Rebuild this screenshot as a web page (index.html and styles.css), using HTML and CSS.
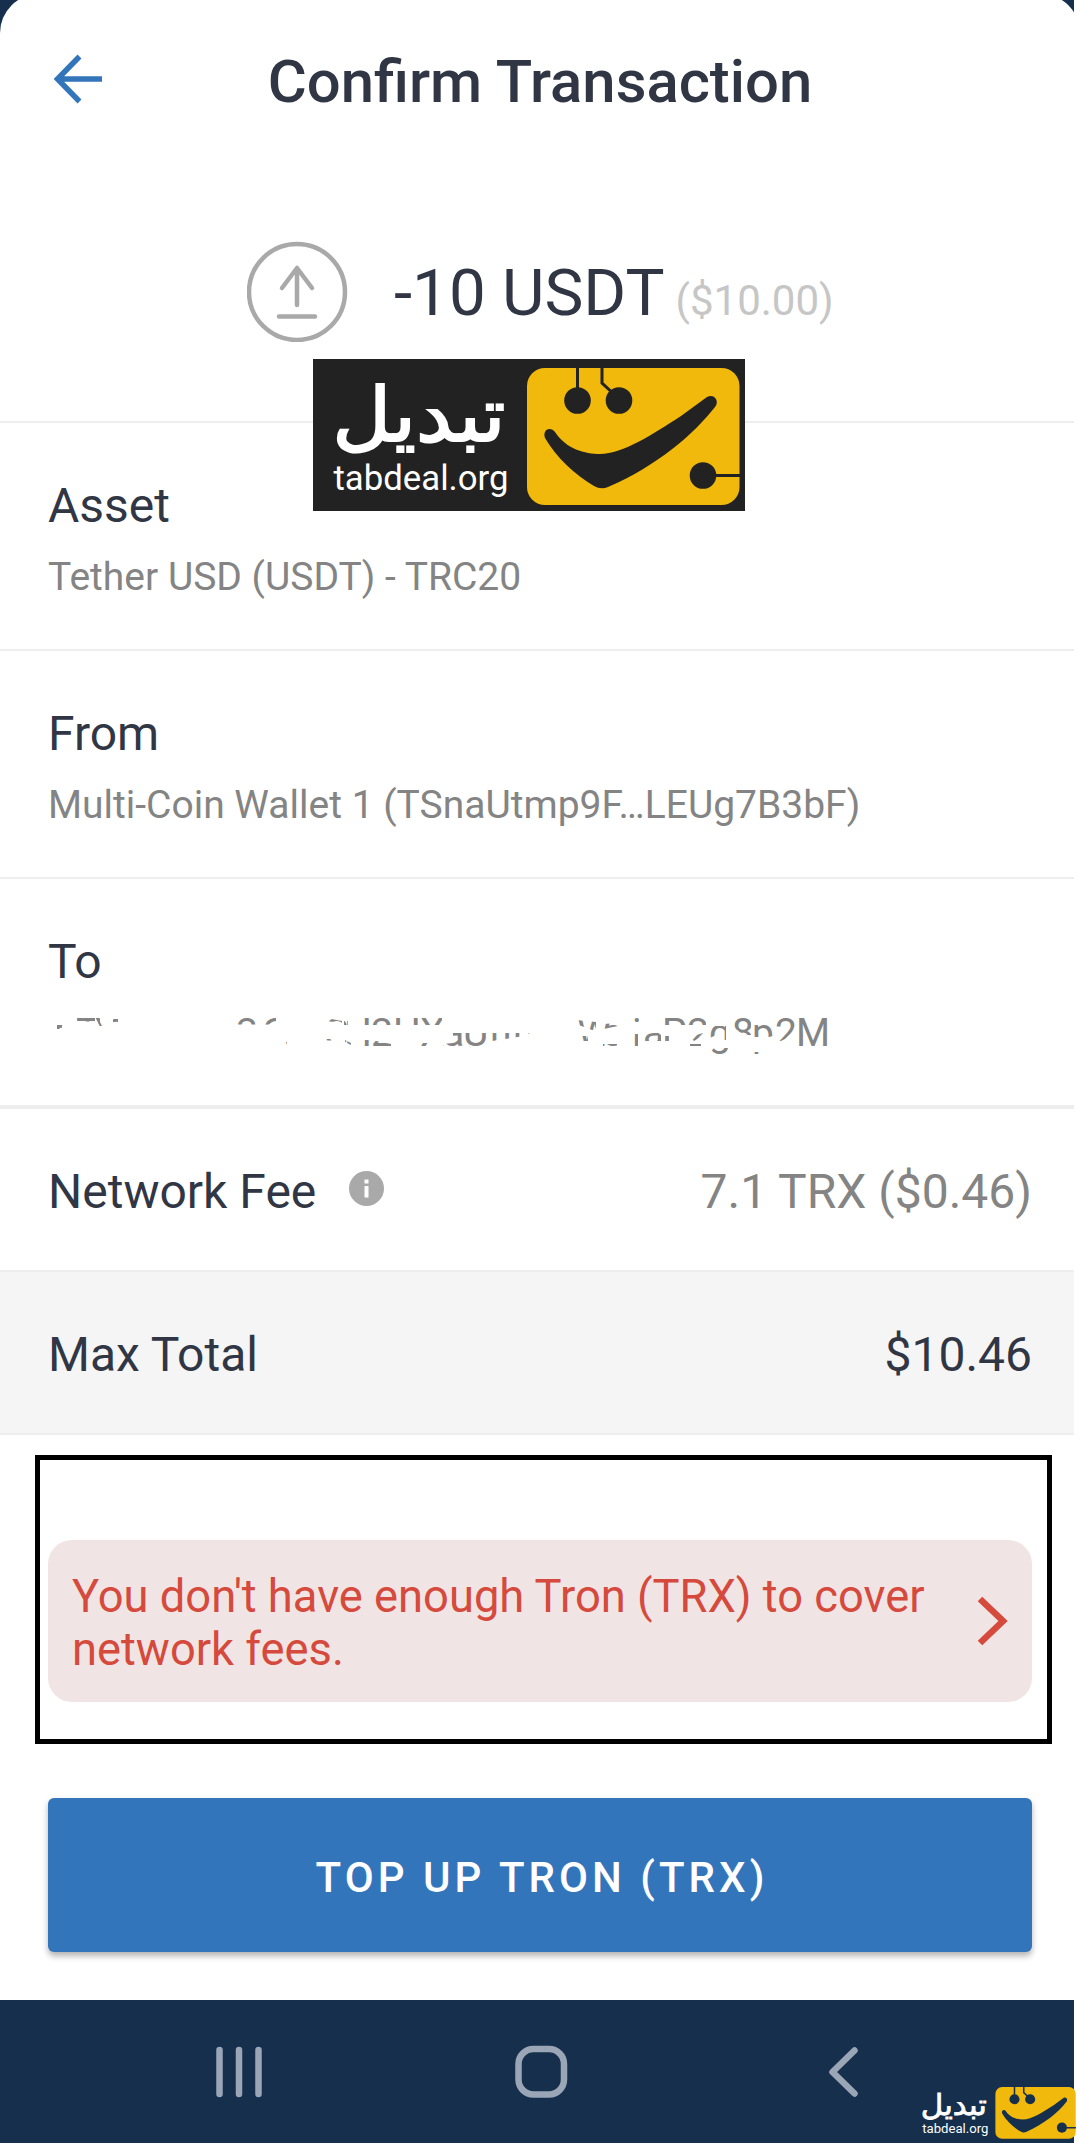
FILE: index.html
```
<!DOCTYPE html>
<html lang="en">

<head>
  <meta charset="utf-8">
  <title>Confirm Transaction</title>
  <link rel="stylesheet" href="styles.css">
</head>

<body>
  <div class="screen">
    <div class="sheet">
      <div class="header">
        <svg class="back" width="50" height="50" viewBox="0 0 50 50">
          <path d="M50 25H6M27.500 2.500L5.500 25l22 22.500" fill="none" stroke="#3375bb" stroke-width="5.500"/>
        </svg>
        <h1 class="title">Confirm Transaction</h1>
      </div>

      <div class="amount">
        <svg class="send-icon" width="101" height="101" viewBox="0 0 101 101">
          <g fill="none" stroke="#a9a9a9" stroke-width="4.500" stroke-linecap="round" stroke-linejoin="round">
            <circle cx="50" cy="51" r="48"/>
            <path d="M50 64V27M35 47l15-20 15 20M32 75.500h36"/>
          </g>
        </svg>
        <span class="amount-value">-10 USDT</span>
        <span class="amount-fiat">($10.00)</span>
      </div>

      <div class="row">
        <div class="label">Asset</div>
        <div class="value">Tether USD (USDT) - TRC20</div>
      </div>
      <div class="row">
        <div class="label">From</div>
        <div class="value">Multi-Coin Wallet 1 (TSnaUtmp9F…LEUg7B3bF)</div>
      </div>
      <div class="row row-last">
        <div class="label">To</div>
        <!-- address is partly wiped out -->
        <svg class="address" width="800" height="50" viewBox="40 1010 800 50">
          <clipPath id="wiped">
            <path d="M57 1025h5v4h-5zM77 1017h18v4.500h-18zM80 1034h5v7h-5zM96 1018h4v4l2 4h-3zM113 1019h5v3h-5zM228 1018h4v3h-4zM236 1017h40v7.500h-40zM302 1021h4v4h-4zM283 1042h4v4h-4zM326 1018l16 3v2l-16-2zM344 1021h4v4h-4zM326 1039h6v1.500h-6zM345 1040l6 3v2l-6-3zM362 1017h80v8h-80zM363 1040h8l20 4v2h-28zM420 1043h14v3h-14zM443 1044l10-1v-10h36v13h-46zM490 1033h40l-6 3-32 5zM576 1020l20 2v8h-4l-16-6zM603 1024l15-1v3l-15 3zM633 1016h6v6h-6zM577 1036h11v5h-11zM603 1044h14v3h-14zM632 1034h6v12h-6zM641 1032h16l4 3v6h-20zM664 1017h42v8h-42zM664 1036h5v5h-5zM690 1044h11v3h-11zM690 1037l13-4 3 1-12 7zM710 1026h16v14h-4v-8l-12 6zM710 1048h18v7h-18zM731 1016h20v19h-6l-14-8zM754 1025h19v11l-4 1h-15zM753 1052h6v2h-6zM775 1016h20v14l-10 9-4 2h-6zM797 1014h34v36h-34z"/>
          </clipPath>
          <g clip-path="url(#wiped)">
            <text class="address-text" y="1046" x="52 76 95 113 236 261 282 325 344 371 393 420 443 463 490 513 577 603 632 643 662 687 709 732 752 775 796">tTYi26tSH2HXaUnnWsiaP2g8p2M</text>
          </g>
        </svg>
      </div>

      <div class="line">
        <span class="line-name">Network Fee</span>
        <svg class="info" width="35" height="35" viewBox="0 0 35 35">
          <circle cx="17.500" cy="17.500" r="17.500" fill="#a9a9a9"/>
          <path d="M15.500 8.500h4v4h-4zM15.500 15h4v11.500h-4z" fill="#fff"/>
        </svg>
        <span class="line-fee">7.1 TRX ($0.46)</span>
      </div>
      <div class="line total">
        <span class="line-name">Max Total</span>
        <span class="line-sum">$10.46</span>
      </div>

      <div class="highlight">
        <div class="alert">
          <p class="alert-text">You don't have enough Tron (TRX) to cover network fees.</p>
          <svg class="chevron" width="34" height="50" viewBox="0 0 34 50">
            <path d="M3 3l23 22L3 47" fill="none" stroke="#d54a3c" stroke-width="6.500"/>
          </svg>
        </div>
      </div>

      <button class="topup">TOP UP TRON (TRX)</button>

      <div class="navbar">
        <svg width="1080" height="143" viewBox="0 2000 1080 143">
          <g fill="none" stroke="#9aa6b6" stroke-width="6.500" stroke-linecap="round" stroke-linejoin="round">
            <path d="M219.500 2050v44M239 2050v44M258.500 2050v44"/>
            <rect x="518.500" y="2049" width="45.500" height="45.500" rx="15"/>
            <path d="M854.500 2050.500L832.500 2072l22 21.500"/>
          </g>
        </svg>
      </div>
    </div>

    <svg class="banner" width="432" height="152" viewBox="0 0 432 152">
      <rect width="432" height="152" fill="#222"/>
      <text class="brand-fa" transform="translate(192.500 81.500) scale(1.065 .985)" direction="rtl">تبدیل</text>
      <text class="brand-url" x="20.500" y="131" textLength="175" lengthAdjust="spacingAndGlyphs">tabdeal.org</text>
      <g class="face">
        <rect x="214" y="9" width="212.500" height="137" rx="18" fill="#f0b90b"/>
        <g fill="#222">
          <circle cx="264.500" cy="41.500" r="13.300"/>
          <circle cx="306" cy="41.500" r="13.300"/>
          <circle cx="390" cy="116.500" r="13.300"/>
          <path d="M232 79C229 70 238 67 242 73C253 90 272 95 287 95C310 95 340 75 368 57L394 38C401 34 407 42 402 48C381 75 344 107 295 128Q288 131 281 127C262 116 243 98 232 79Z"/>
        </g>
        <path d="M264.500 9v32M289 9v15l15 14M390 116.500h37" fill="none" stroke="#222" stroke-width="3"/>
      </g>
    </svg>
  </div>

  <svg class="watermark" width="176" height="73" viewBox="-20 -17 176 73">
    <text class="brand-fa" transform="translate(67 30.500) scale(.408 .375)" direction="rtl">تبدیل</text>
    <text class="brand-url" transform="translate(-5.500 -.400) scale(.378)" x="20.500" y="131" textLength="175" lengthAdjust="spacingAndGlyphs">tabdeal.org</text>
    <g transform="translate(-5.500 -.400) scale(.378)">
      <rect x="214" y="9" width="212.500" height="137" rx="18" fill="#f0b90b"/>
      <g fill="#152f4c">
        <circle cx="264.500" cy="41.500" r="13.300"/>
        <circle cx="306" cy="41.500" r="13.300"/>
        <circle cx="390" cy="116.500" r="13.300"/>
        <path d="M232 79C229 70 238 67 242 73C253 90 272 95 287 95C310 95 340 75 368 57L394 38C401 34 407 42 402 48C381 75 344 107 295 128Q288 131 281 127C262 116 243 98 232 79Z"/>
      </g>
      <path d="M264.500 5v36M289 5v19l15 14M390 116.500h37" fill="none" stroke="#152f4c" stroke-width="4"/>
    </g>
  </svg>
</body>

</html>
```
FILE: styles.css
```
body {
  margin: 0;
  background: #fff;
  font-family: Roboto, "Noto Sans", sans-serif;
  position: relative;
  width: 1080px;
  height: 2143px;
  overflow: hidden;
}

.screen {
  position: relative;
  width: 1074px;
  height: 2143px;
  overflow: hidden;
  background: #152f4c;
}

/* rounded top runs slightly above the screen edge */
.sheet {
  width: 1080px;
  height: 2149px;
  margin-top: -6px;
  border-radius: 39px 39px 0 0;
  background: #fff;
  color: #313645;
  box-sizing: border-box;
  padding-top: 6px;
}

.header {
  height: 160px;
  display: grid;
  grid-template-columns: 104px 872px 104px;
  align-items: center;
}

.back {
  margin: -2px 0 0 52px;
}

.title {
  margin: 3px 0 0;
  font-size: 59.8px;
  font-weight: 500;
  text-align: center;
}

.amount {
  height: 263px;
  box-sizing: border-box;
  border-bottom: 2px solid #eee;
  padding: 81px 0 0 247px;
  display: flex;
  align-items: baseline;
  white-space: nowrap;
}

.send-icon {
  align-self: flex-start;
}

.amount-value {
  margin: 13px 0 0 46px;
  font-size: 65.5px;
}

.amount-fiat {
  margin-left: 11px;
  font-size: 42px;
  color: #c6c6c6;
}

.row {
  height: 228px;
  box-sizing: border-box;
  padding: 53px 48px 0;
  border-bottom: 2px solid #eee;
}

.row-last {
  height: 230px;
  border-bottom-width: 4px;
}

.label {
  font-size: 48px;
  line-height: 60px;
}

.value {
  margin-top: 17px;
  font-size: 39px;
  line-height: 48px;
  color: #848484;
}

.address {
  display: block;
  margin: 18px 0 0 -8px;
}

.address-text {
  font-size: 39px;
  fill: #848484;
}

.line {
  height: 163px;
  box-sizing: border-box;
  padding: 3px 48px 0;
  border-bottom: 2px solid #eee;
  display: flex;
  align-items: center;
  font-size: 48px;
}

.info {
  margin: -5px 0 0 33px;
}

.line-fee,
.line-sum {
  margin-left: auto;
}

.line-fee {
  color: #848484;
}

.total {
  background: #f5f5f5;
}

.highlight {
  width: 1017px;
  height: 289px;
  margin: 20px 0 0 35px;
  box-sizing: border-box;
  border: 5px solid #000;
  padding: 80px 15px 0 8px;
}

.alert {
  height: 162px;
  border-radius: 24px;
  background: #f1e4e4;
  color: #d54a3c;
  display: flex;
  align-items: center;
  justify-content: space-between;
  padding: 0 21px 0 24px;
}

.alert-text {
  width: 880px;
  margin: 4px 0 0;
  font-size: 45.3px;
  line-height: 53px;
}

.topup {
  display: block;
  width: 984px;
  height: 154px;
  margin: 54px 0 48px 48px;
  padding: 4px 0 0 4px;
  border: none;
  border-radius: 6px;
  background: #3375bb;
  box-shadow: 0 4px 6px rgba(0, 0, 0, 0.3);
  color: #fff;
  font-family: inherit;
  font-size: 42px;
  font-weight: 500;
  letter-spacing: 4.05px;
}

.navbar {
  height: 143px;
  background: #152f4c;
}

.navbar svg {
  display: block;
}

.banner {
  position: absolute;
  left: 313px;
  top: 359px;
}

.watermark {
  position: absolute;
  left: 900px;
  top: 2067px;
}

.brand-fa {
  font-family: "DejaVu Sans", sans-serif;
  font-size: 76px;
  fill: #fff;
  stroke: #fff;
  stroke-width: 2px;
}

.brand-url {
  font-size: 35px;
  fill: #fff;
}
```
